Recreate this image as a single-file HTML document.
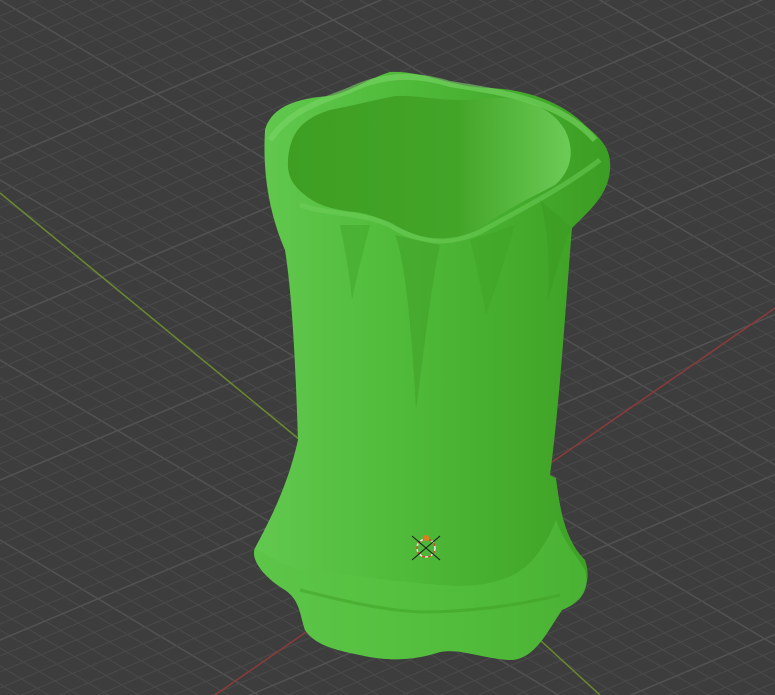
<!DOCTYPE html>
<html><head><meta charset="utf-8"><style>
html,body{margin:0;padding:0;background:#3d3d3d;overflow:hidden;width:775px;height:695px}
svg{display:block;position:absolute;left:0;top:0}
</style></head><body>
<svg id="s" width="775" height="695" viewBox="0 0 775 695" xmlns="http://www.w3.org/2000/svg">
<defs>
<linearGradient id="body" x1="0" x2="1" y1="0" y2="0">
<stop offset="0" stop-color="#62c94f"/>
<stop offset="0.35" stop-color="#52bd3d"/>
<stop offset="0.75" stop-color="#44ab2c"/>
<stop offset="1" stop-color="#3c9d23"/>
</linearGradient>
<linearGradient id="inner" x1="0" x2="1" y1="0" y2="0">
<stop offset="0" stop-color="#3e9f23"/>
<stop offset="0.6" stop-color="#43a528"/>
<stop offset="1" stop-color="#6bcb56"/>
</linearGradient>
<linearGradient id="base" x1="0" x2="1" y1="0" y2="0">
<stop offset="0" stop-color="#5cc548"/>
<stop offset="0.5" stop-color="#55c040"/>
<stop offset="1" stop-color="#4cb536"/>
</linearGradient>
</defs>
<rect width="775" height="695" fill="#3d3d3d"/>
<g id="grid" stroke="#4a4a4a" stroke-width="1" fill="none"></g>
<line x1="0" y1="193" x2="300" y2="440" stroke="#6a8a2e" stroke-width="1.5"/>
<line x1="540" y1="640" x2="600" y2="695" stroke="#6a8a2e" stroke-width="1.5"/>
<line x1="775" y1="308" x2="215" y2="695" stroke="#8c3a3a" stroke-width="1.5"/>
<path fill="url(#body)" d="M265,130 C272,105 300,98 330,96 C350,92 370,78 390,72 C420,70 450,86 485,88 C520,88 560,100 585,125 C600,138 612,148 610,170 C608,195 590,210 572,228 C566,300 560,400 550,475 L556,478 C560,510 565,540 585,560 C592,580 585,600 562,610 C548,630 535,660 510,660 C480,658 460,648 440,652 C415,660 390,662 360,655 C335,650 315,645 305,630 C300,615 300,600 285,590 C265,578 250,560 255,548 C270,520 288,485 298,440 C296,380 293,300 285,250 C272,220 262,180 265,130 Z"/>
<path fill="url(#inner)" d="M288,160 C290,130 305,118 330,110 C355,105 375,100 395,96 C425,95 450,104 485,98 C520,96 550,105 565,130 C575,150 572,170 555,185 C530,198 505,210 480,228 C460,240 440,242 420,236 C395,228 380,215 355,212 C335,210 318,206 305,195 C292,185 287,175 288,160 Z"/>
<path fill="none" stroke="#78d664" stroke-width="6" opacity="0.6" d="M270,140 C290,110 320,102 350,90 C380,76 410,72 450,84 C500,92 560,100 595,140"/>
<path fill="none" stroke="#6fd05a" stroke-width="5" opacity="0.5" d="M300,205 C330,215 360,212 390,225 C420,245 450,245 480,232 C520,210 560,190 600,160"/>
<path fill="#3fa126" opacity="0.55" d="M395,235 C405,260 412,330 416,410 C424,350 432,280 440,245 Z"/>
<path fill="#3fa126" opacity="0.45" d="M340,225 C345,250 350,275 352,300 C358,270 365,245 370,225 Z"/>
<path fill="#3fa126" opacity="0.45" d="M470,240 C478,270 483,300 486,315 C495,290 505,260 515,225 Z"/>
<path fill="#3a9a20" opacity="0.5" d="M540,200 C548,230 550,260 548,300 C560,260 566,235 572,228 Z"/>
<path fill="url(#base)" opacity="0.85" d="M255,548 C275,560 300,575 320,570 C350,575 380,580 410,582 C440,585 470,590 500,580 C520,575 540,560 556,520 C565,545 580,560 585,570 C590,588 583,602 562,610 C548,630 535,660 510,660 C480,658 460,648 440,652 C415,660 390,662 360,655 C335,650 315,645 305,630 C300,615 300,600 285,590 C265,578 250,560 255,548 Z"/>
<path fill="none" stroke="#3d9f24" stroke-width="3" opacity="0.5" d="M300,590 C340,600 380,610 420,612 C470,612 520,605 560,595"/>
<g transform="translate(426,548)">
<circle r="9" fill="none" stroke="#e8e8e8" stroke-width="1.5" stroke-dasharray="3 3"/>
<circle r="9" fill="none" stroke="#d84a2a" stroke-width="1.5" stroke-dasharray="3 3" stroke-dashoffset="3"/>
<line x1="-14" y1="-12" x2="14" y2="12" stroke="#1a1a1a" stroke-width="1"/>
<line x1="14" y1="-12" x2="-14" y2="12" stroke="#1a1a1a" stroke-width="1"/>
<circle cx="0" cy="-10" r="3" fill="#e07a1a"/>
</g>
</svg>
<script>
(function(){
var g=document.getElementById('grid'),ns='http://www.w3.org/2000/svg';
function L(x1,y1,x2,y2,w){var l=document.createElementNS(ns,'line');l.setAttribute('x1',x1);l.setAttribute('y1',y1);l.setAttribute('x2',x2);l.setAttribute('y2',y2);if(w){l.setAttribute('stroke-width',w);l.setAttribute('stroke','#525252');}g.appendChild(l);}
for(var i=-80;i<80;i++){var o=i*18;L(-100,o-0.6*100,900,o+0.6*900,i%10==0?1.5:0);}
for(var j=-80;j<120;j++){var p=j*16;L(-100,p+0.42*100,900,p-0.42*900,j%10==0?1.5:0);}
})();
</script>
</body></html>
